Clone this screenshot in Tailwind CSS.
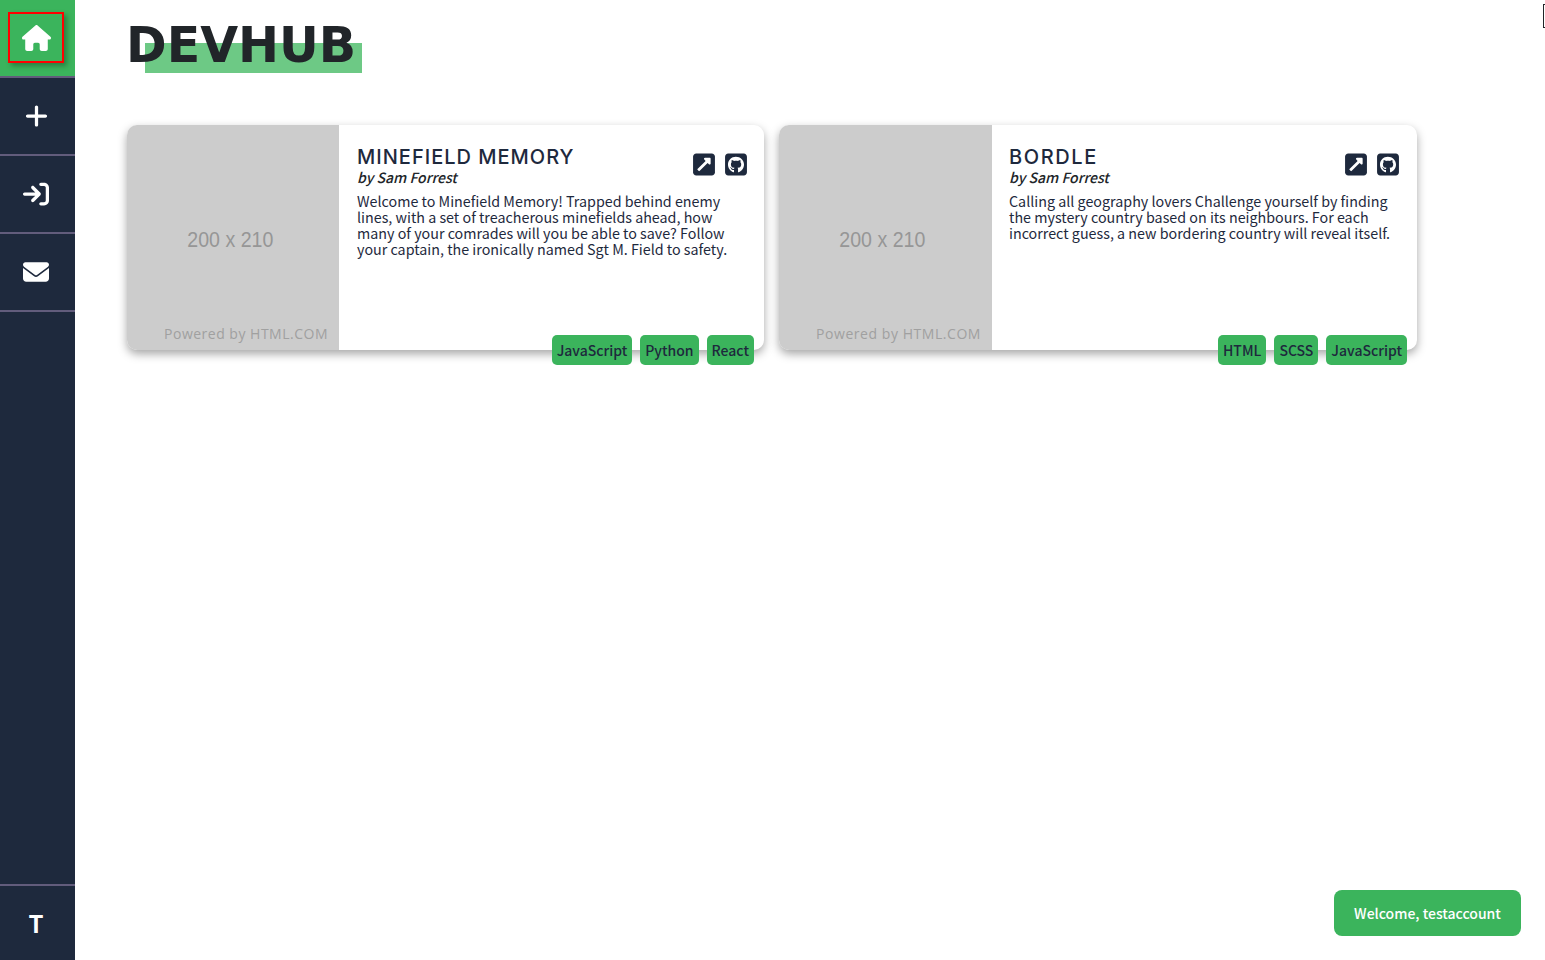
<!DOCTYPE html>
<html lang="en">
<head>
    <meta charset="UTF-8">
    <meta name="viewport" content="width=device-width, initial-scale=1.0">
    <title>DevHub</title>
    <script src="https://cdn.jsdelivr.net/npm/@tailwindcss/browser@4"></script>
</head>
<body class="relative h-[960px] overflow-hidden bg-white font-['Noto_Sans_CJK_SC','Noto_Sans',sans-serif] text-[#212529]">
    <!-- stray box at the window edge -->
    <div class="absolute left-[1543px] top-[4px] h-[24px] w-[10px] border border-[#212529]"></div>

    <div class="flex h-full">
        <!-- sidebar -->
        <nav class="flex w-[75px] shrink-0 flex-col bg-[#1e293d]">
            <div class="flex h-[78px] items-start justify-center border-b-2 border-[#625c7c] bg-[#3bb45c] pt-3 pr-[3px]">
                <div class="flex h-[51px] w-[56px] items-center justify-center border-2 border-[#ff0000] shadow-[3px_3px_5px_rgba(0,0,0,0.3)]">
                    <svg class="h-[26px] w-[29px] fill-white" viewBox="0 0 576 512"><path d="M575.8 255.5c0 18-15 32.1-32 32.1h-32l.7 160.2c0 2.7-.2 5.4-.5 8.1V472c0 22.1-17.9 40-40 40H456c-1.1 0-2.2 0-3.3-.1c-1.4 .1-2.8 .1-4.2 .1H416 392c-22.1 0-40-17.9-40-40V448 384c0-17.7-14.3-32-32-32H256c-17.7 0-32 14.3-32 32v64 24c0 22.1-17.9 40-40 40H160 128.1c-1.5 0-3-.1-4.5-.2c-1.2 .1-2.4 .2-3.6 .2H104c-22.1 0-40-17.9-40-40V360c0-.9 0-1.9 .1-2.8V287.6H32c-18 0-32-14-32-32.1c0-9 3-17 10-24L266.4 8c7-7 15-8 22-8s15 2 21 7L564.8 231.5c8 7 12 15 11 24z"/></svg>
                </div>
            </div>
            <div class="flex h-[78px] items-center justify-center border-b-2 border-[#625c7c] pr-[3px]">
                <svg class="h-[26px] w-[23px] fill-white" viewBox="0 0 448 512"><path d="M256 80c0-17.7-14.3-32-32-32s-32 14.3-32 32V224H48c-17.7 0-32 14.3-32 32s14.3 32 32 32H192V432c0 17.7 14.3 32 32 32s32-14.3 32-32V288H400c17.7 0 32-14.3 32-32s-14.3-32-32-32H256V80z"/></svg>
            </div>
            <div class="flex h-[78px] items-center justify-center border-b-2 border-[#625c7c] pr-[3px]">
                <svg class="h-[26px] w-[26px] fill-white" viewBox="0 0 512 512"><path d="M352 96l64 0c17.7 0 32 14.3 32 32l0 256c0 17.7-14.3 32-32 32l-64 0c-17.7 0-32 14.3-32 32s14.3 32 32 32l64 0c53 0 96-43 96-96l0-256c0-53-43-96-96-96l-64 0c-17.7 0-32 14.3-32 32s14.3 32 32 32zm-9.4 182.6c12.5-12.5 12.5-32.8 0-45.3l-128-128c-12.5-12.5-32.8-12.5-45.3 0s-12.5 32.8 0 45.3L242.7 224 32 224c-17.7 0-32 14.3-32 32s14.3 32 32 32l210.7 0-73.4 73.4c-12.5 12.5-12.5 32.8 0 45.3s32.8 12.5 45.3 0l128-128z"/></svg>
            </div>
            <div class="flex h-[78px] items-center justify-center border-b-2 border-[#625c7c] pr-[3px]">
                <svg class="h-[26px] w-[26px] fill-white" viewBox="0 0 512 512"><path d="M48 64C21.5 64 0 85.5 0 112c0 15.1 7.1 29.3 19.2 38.4L236.8 313.6c11.4 8.5 27 8.5 38.4 0L492.8 150.4c12.1-9.1 19.2-23.3 19.2-38.4c0-26.5-21.5-48-48-48H48zM0 176V384c0 35.3 28.7 64 64 64H448c35.3 0 64-28.7 64-64V176L294.4 339.2c-22.8 17.1-54 17.1-76.8 0L0 176z"/></svg>
            </div>
            <div class="mt-auto flex h-[76px] items-center justify-center border-t-2 border-[#625c7c] pr-[3px] text-[24px] font-bold text-white">T</div>
        </nav>

        <!-- main -->
        <main class="flex-1 pl-[52px]">
            <div class="relative mt-[14px] h-[59px] w-[235px]">
                <div class="absolute bottom-0 left-[18px] h-[30px] w-[217px] bg-[#6dc985]"></div>
                <h1 class="relative -ml-px font-['DejaVu_Sans',sans-serif] text-[49px] font-bold leading-[63px] text-[#212529]">DEVHUB</h1>
            </div>

            <div class="mt-[52px] flex gap-[15px]">
                <!-- card 1 -->
                <article class="relative flex h-[225px] w-[637px] rounded-[10px] bg-white shadow-[0_4px_10px_rgba(0,0,0,0.35)]">
                    <div class="relative flex w-[212px] shrink-0 items-center justify-center overflow-hidden rounded-l-[10px] bg-[#cccccc] pt-[4px] pr-[6px]">
                        <span class="scale-x-[0.89] font-['Liberation_Sans',sans-serif] text-[22px] text-[#969696]">200 x 210</span>
                        <span class="absolute bottom-[6px] right-[11px] font-['Open_Sans',sans-serif] text-[14px] tracking-[0.5px] text-[#a0a0a0]">Powered by HTML.COM</span>
                    </div>
                    <div class="min-w-0 flex-1 pl-[18px] pr-[17px] pt-[20px]">
                        <div class="flex justify-between">
                            <div>
                                <h2 class="font-['Inter',sans-serif] text-[20px] font-medium leading-[24px] tracking-[1px] text-[#1e293d]">MINEFIELD MEMORY</h2>
                                <p class="-mt-px mb-px text-[14px] font-medium italic leading-[18px]">by Sam Forrest</p>
                            </div>
                            <div class="flex gap-[10px] pt-[7px]">
                                <svg class="h-[25px] w-[22px] fill-[#1e293d]" viewBox="0 0 448 512"><path d="M384 32c35.3 0 64 28.7 64 64V416c0 35.3-28.7 64-64 64H64c-35.3 0-64-28.7-64-64V96C0 60.7 28.7 32 64 32H384z"/><path class="fill-white" transform="translate(33.6 38.4) scale(.85)" d="M360 96H248.029c-21.313 0-32.08 25.861-16.971 40.971l31.984 31.987L67.515 364.485c-4.686 4.686-4.686 12.284 0 16.971l31.029 31.029c4.687 4.686 12.285 4.686 16.971 0l195.526-195.526 31.988 31.991c14.983 14.982 40.971 4.462 40.971-16.971V120c0-13.255-10.745-24-24-24z"/></svg>
                                <svg class="h-[25px] w-[22px] fill-[#1e293d]" viewBox="0 0 448 512"><path d="M448 96c0-35.3-28.7-64-64-64H64C28.7 32 0 60.7 0 96V416c0 35.3 28.7 64 64 64H384c35.3 0 64-28.7 64-64V96zM265.8 407.7c0-1.8 0-6 .1-11.6c.1-11.4 .1-28.8 .1-43.7c0-15.6-5.2-25.5-11.3-30.7c37-4.1 76-9.2 76-73.1c0-18.2-6.5-27.3-17.1-39c1.7-4.3 7.4-22-1.7-45c-13.9-4.3-45.7 17.9-45.7 17.9c-13.2-3.7-27.5-5.6-41.6-5.6s-28.4 1.9-41.6 5.6c0 0-31.8-22.2-45.7-17.9c-9.1 22.9-3.5 40.6-1.7 45c-10.6 11.7-15.6 20.8-15.6 39c0 63.6 37.3 69 74.3 73.1c-4.8 4.3-9.1 11.7-10.6 22.3c-9.5 4.3-33.8 11.7-48.3-13.9c-9.1-15.8-25.5-17.1-25.5-17.1c-16.2-.2-1.1 10.2-1.1 10.2c10.8 5 18.4 24.2 18.4 24.2c9.7 29.7 56.1 19.7 56.1 19.7c0 9 .1 21.7 .1 30.6c0 4.8 .1 8.6 .1 10c0 4.3-3 9.5-11.5 8C106 393.6 59.8 330.8 59.8 257.4c0-91.8 70.2-161.5 162-161.5s166.2 69.7 166.2 161.5c.1 73.4-44.7 136.3-110.7 158.3c-8.4 1.5-11.5-3.7-11.5-8z"/></svg>
                            </div>
                        </div>
                        <p class="mt-[6px] text-[14.3px] leading-[16px] text-[#1e293d]">Welcome to Minefield Memory! Trapped behind enemy lines, with a set of treacherous minefields ahead, how many of your comrades will you be able to save? Follow your captain, the ironically named Sgt M. Field to safety.</p>
                    </div>
                    <div class="absolute bottom-[-15px] right-[10px] flex gap-2">
                        <span class="flex h-[30px] items-center rounded-[5px] bg-[#3bb45c] px-[5px] text-[14px] font-medium text-[#1e293d]">JavaScript</span>
                        <span class="flex h-[30px] items-center rounded-[5px] bg-[#3bb45c] px-[5px] text-[14px] font-medium text-[#1e293d]">Python</span>
                        <span class="flex h-[30px] items-center rounded-[5px] bg-[#3bb45c] px-[5px] text-[14px] font-medium text-[#1e293d]">React</span>
                    </div>
                </article>

                <!-- card 2 -->
                <article class="relative flex h-[225px] w-[638px] rounded-[10px] bg-white shadow-[0_4px_10px_rgba(0,0,0,0.35)]">
                    <div class="relative flex w-[213px] shrink-0 items-center justify-center overflow-hidden rounded-l-[10px] bg-[#cccccc] pt-[4px] pr-[6px]">
                        <span class="scale-x-[0.89] font-['Liberation_Sans',sans-serif] text-[22px] text-[#969696]">200 x 210</span>
                        <span class="absolute bottom-[6px] right-[11px] font-['Open_Sans',sans-serif] text-[14px] tracking-[0.55px] text-[#a0a0a0]">Powered by HTML.COM</span>
                    </div>
                    <div class="min-w-0 flex-1 pl-[17px] pr-[18px] pt-[20px]">
                        <div class="flex justify-between">
                            <div>
                                <h2 class="font-['Inter',sans-serif] text-[20px] font-medium leading-[24px] tracking-[1.6px] text-[#1e293d]">BORDLE</h2>
                                <p class="-mt-px mb-px text-[14px] font-medium italic leading-[18px]">by Sam Forrest</p>
                            </div>
                            <div class="flex gap-[10px] pt-[7px]">
                                <svg class="h-[25px] w-[22px] fill-[#1e293d]" viewBox="0 0 448 512"><path d="M384 32c35.3 0 64 28.7 64 64V416c0 35.3-28.7 64-64 64H64c-35.3 0-64-28.7-64-64V96C0 60.7 28.7 32 64 32H384z"/><path class="fill-white" transform="translate(33.6 38.4) scale(.85)" d="M360 96H248.029c-21.313 0-32.08 25.861-16.971 40.971l31.984 31.987L67.515 364.485c-4.686 4.686-4.686 12.284 0 16.971l31.029 31.029c4.687 4.686 12.285 4.686 16.971 0l195.526-195.526 31.988 31.991c14.983 14.982 40.971 4.462 40.971-16.971V120c0-13.255-10.745-24-24-24z"/></svg>
                                <svg class="h-[25px] w-[22px] fill-[#1e293d]" viewBox="0 0 448 512"><path d="M448 96c0-35.3-28.7-64-64-64H64C28.7 32 0 60.7 0 96V416c0 35.3 28.7 64 64 64H384c35.3 0 64-28.7 64-64V96zM265.8 407.7c0-1.8 0-6 .1-11.6c.1-11.4 .1-28.8 .1-43.7c0-15.6-5.2-25.5-11.3-30.7c37-4.1 76-9.2 76-73.1c0-18.2-6.5-27.3-17.1-39c1.7-4.3 7.4-22-1.7-45c-13.9-4.3-45.7 17.9-45.7 17.9c-13.2-3.7-27.5-5.6-41.6-5.6s-28.4 1.9-41.6 5.6c0 0-31.8-22.2-45.7-17.9c-9.1 22.9-3.5 40.6-1.7 45c-10.6 11.7-15.6 20.8-15.6 39c0 63.6 37.3 69 74.3 73.1c-4.8 4.3-9.1 11.7-10.6 22.3c-9.5 4.3-33.8 11.7-48.3-13.9c-9.1-15.8-25.5-17.1-25.5-17.1c-16.2-.2-1.1 10.2-1.1 10.2c10.8 5 18.4 24.2 18.4 24.2c9.7 29.7 56.1 19.7 56.1 19.7c0 9 .1 21.7 .1 30.6c0 4.8 .1 8.6 .1 10c0 4.3-3 9.5-11.5 8C106 393.6 59.8 330.8 59.8 257.4c0-91.8 70.2-161.5 162-161.5s166.2 69.7 166.2 161.5c.1 73.4-44.7 136.3-110.7 158.3c-8.4 1.5-11.5-3.7-11.5-8z"/></svg>
                            </div>
                        </div>
                        <p class="mt-[6px] text-[14.3px] leading-[16px] text-[#1e293d]">Calling all geography lovers Challenge yourself by finding the mystery country based on its neighbours. For each incorrect guess, a new bordering country will reveal itself.</p>
                    </div>
                    <div class="absolute bottom-[-15px] right-[10px] flex gap-2">
                        <span class="flex h-[30px] items-center rounded-[5px] bg-[#3bb45c] px-[5px] text-[14px] font-medium text-[#1e293d]">HTML</span>
                        <span class="flex h-[30px] items-center rounded-[5px] bg-[#3bb45c] px-[5px] text-[14px] font-medium text-[#1e293d]">SCSS</span>
                        <span class="flex h-[30px] items-center rounded-[5px] bg-[#3bb45c] px-[5px] text-[14px] font-medium text-[#1e293d]">JavaScript</span>
                    </div>
                </article>
            </div>
        </main>
    </div>

    <!-- welcome toast -->
    <div class="absolute bottom-[24px] right-[24px] flex h-[46px] w-[187px] items-center justify-center rounded-[8px] bg-[#3bb45c] text-[14px] font-medium text-white">Welcome, testaccount</div>
</body>
</html>
